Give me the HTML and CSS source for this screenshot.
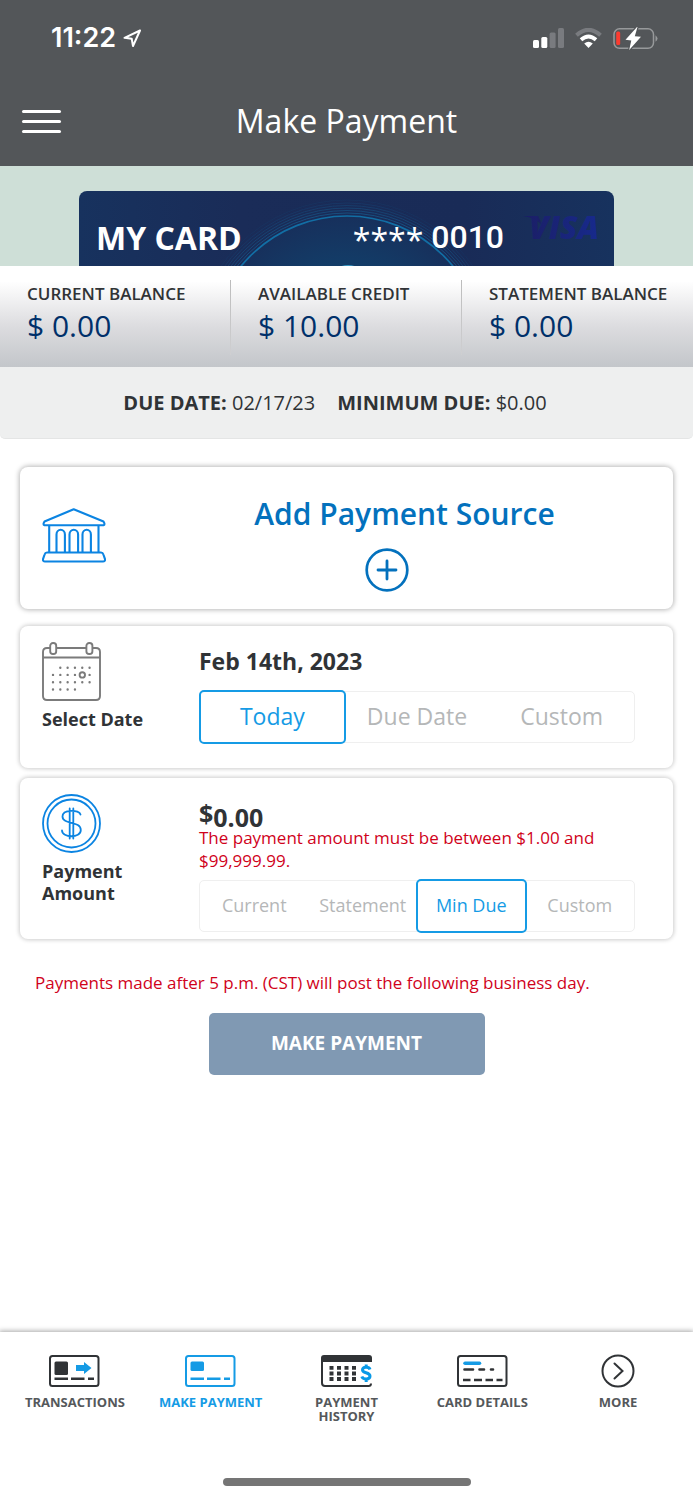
FILE: index.html
```html
<!DOCTYPE html>
<html lang="en">
<head>
<meta charset="utf-8">
<meta name="viewport" content="width=device-width, initial-scale=1">
<title>Make Payment</title>
<link rel="stylesheet" href="styles.css">
</head>
<body>
<header class="top">
  <div class="status">
    <div class="status-left">
      <span class="clock">11:22</span>
      <svg width="19" height="19" viewBox="0 0 19 19" fill="none" stroke="#fff" stroke-width="2" stroke-linejoin="round"><path d="M17 1.500 1.500 8.800 8.700 9.800 10 17Z"/></svg>
    </div>
    <div class="status-right">
      <svg width="31" height="20" viewBox="0 0 31 20"><rect y="12" width="6" height="8" rx="1.500" fill="#fff"/><rect x="8.300" y="9" width="6" height="11" rx="1.500" fill="#fff"/><rect x="16.600" y="4.500" width="6" height="15.500" rx="1.500" fill="#797b7f"/><rect x="25" width="6" height="20" rx="1.500" fill="#797b7f"/></svg>
      <svg width="27" height="20" viewBox="0 0 27 20" fill="none"><path d="M1.500 7.200Q13.500-3.500 25.500 7.200" stroke="#797b7f" stroke-width="4"/><path d="M6 11.800Q13.500 5.200 21 11.800" stroke="#fff" stroke-width="3.800"/><path d="M9.200 15.600Q13.500 12 17.800 15.600L13.500 20Z" fill="#fff"/></svg>
      <svg width="45" height="23" viewBox="0 0 45 23"><rect x="1" y="1.800" width="39.500" height="19.500" rx="5.500" fill="none" stroke="#97999b" stroke-width="1.500"/><path d="M42.500 8.200Q46.500 11.500 42.500 14.800Z" fill="#97999b"/><rect x="3.200" y="4.500" width="4" height="13.500" rx="1.500" fill="#fb3b30"/><path d="M24 0 12.500 12.800 18.300 13.600 16.200 23 28 9.800 21.800 9.200 24.500 0Z" fill="#fff" stroke="#535659" stroke-width="2.500" paint-order="stroke"/></svg>
    </div>
  </div>
  <div class="titlebar">
    <button class="menu" aria-label="Menu"><span></span><span></span><span></span></button>
    <h1>Make Payment</h1>
  </div>
</header>

<main>
  <section class="hero">
    <div class="bankcard">
      <svg class="art" viewBox="0 0 535 75" preserveAspectRatio="xMidYMin slice" fill="none">
        <defs>
          <linearGradient id="navy"><stop stop-color="#17325e"/><stop offset=".3" stop-color="#1a2c58"/><stop offset=".72" stop-color="#192b57"/><stop offset="1" stop-color="#17325e"/></linearGradient>
          <radialGradient id="glow"><stop stop-color="#075a88"/><stop offset=".6" stop-color="#123e69"/><stop offset="1" stop-color="#17305c"/></radialGradient>
          <linearGradient id="blue"><stop stop-color="#1b1f68"/><stop offset="1" stop-color="#172a8d"/></linearGradient>
        </defs>
        <path fill="url(#navy)" d="M0 0H535V75H0Z"/>
        <circle cx="268" cy="162" r="137" fill="url(#glow)" stroke="#126ea4" stroke-width="1.700"/>
        <g stroke="#176b9f"><circle cx="268" cy="162" r="140" opacity=".55"/><circle cx="268" cy="162" r="142.500" opacity=".45"/><circle cx="268" cy="162" r="145" opacity=".36"/><circle cx="268" cy="162" r="147.500" opacity=".27"/><circle cx="268" cy="162" r="150" opacity=".18"/><circle cx="268" cy="162" r="153" opacity=".1"/></g>
        <ellipse cx="269" cy="77" rx="9" ry="3" fill="#3b9ac4"/>
        <path d="M444 25H459L463 34Q457 27 444 25Z" fill="#1b1f68"/>
        <text class="visa" x="450" y="48" fill="url(#blue)">VISA</text>
      </svg>
      <span class="cardname">MY CARD</span>
      <span class="cardnum"><span class="stars">****</span><span>0010</span></span>
    </div>
  </section>

  <dl class="balances">
    <div><dt>CURRENT BALANCE</dt><dd>$ 0.00</dd></div>
    <div><dt>AVAILABLE CREDIT</dt><dd>$ 10.00</dd></div>
    <div><dt>STATEMENT BALANCE</dt><dd>$ 0.00</dd></div>
  </dl>

  <p class="due"><span><b>DUE DATE:</b> 02/17/23</span><span><b>MINIMUM DUE:</b> $0.00</span></p>

  <div class="panels">
    <section class="panel source">
      <svg width="64" height="55" viewBox="0 0 64 55" fill="none" stroke="#0b84e2" stroke-width="2.100" stroke-linejoin="round"><path d="M31.700 1.200 2.500 13.500Q.5 16.800 2.500 17.300H61.500Q63.500 16.800 61.500 13.500ZM7.200 17.500V44.500M56.500 17.500V44.500M14.500 44.500V26.500A4.200 4.700 0 0 1 22.900 26.500V44.500M27.500 44.500V26.500A4.300 4.700 0 0 1 36.100 26.500V44.500M40.500 44.500V26.500A4.200 4.700 0 0 1 48.900 26.500V44.500M5 44.500H59Q60.800 44.500 61.400 46.500L63 51.200Q63.300 53.500 61 53.500H3Q.7 53.500 1 51.200L2.600 46.500Q3.200 44.500 5 44.500Z"/></svg>
      <div class="source-body">
        <h2>Add Payment Source</h2>
        <button class="add" aria-label="Add payment source"><svg width="44" height="44" viewBox="0 0 44 44" fill="none" stroke="#0371bd" stroke-linecap="round"><circle cx="22" cy="22" r="20.300" stroke-width="2.700"/><path d="M22 13V31M13 22H31" stroke-width="2.800"/></svg></button>
      </div>
    </section>

    <section class="panel date">
      <div class="side">
        <svg width="59" height="59" viewBox="0 0 59 59" fill="none" stroke="#7b7b7b" stroke-width="1.900"><path d="M8 6H5Q1 6 1 10V54Q1 58 5 58H54Q58 58 58 54V10Q58 6 54 6H50M14.500 6H44M1 15.500H58"/><rect x="8.200" y="1" width="6" height="11" rx="2.800"/><rect x="44.400" y="1" width="6" height="11" rx="2.800"/><circle cx="40.300" cy="32.900" r="2.700"/><path stroke-width="2.400" stroke-linecap="round" stroke-dasharray="0 7.320" d="M18.300 25.700H48M11 32.900H34M47.600 32.900h.1M11 40.200H48M11 47.500H34"/></svg>
        <h2>Select Date</h2>
      </div>
      <div class="fields">
        <p class="value">Feb 14th, 2023</p>
        <div class="tabs" role="group" aria-label="Select date">
          <button aria-pressed="true">Today</button><button aria-pressed="false">Due Date</button><button aria-pressed="false">Custom</button>
        </div>
      </div>
    </section>

    <section class="panel amount">
      <div class="side">
        <svg width="59" height="59" viewBox="0 0 59 59" fill="none" stroke="#0b84e2" stroke-width="1.800" stroke-linecap="round"><circle cx="29.500" cy="29.500" r="28.500"/><circle cx="29.500" cy="29.500" r="24"/><path d="M38.500 20.500C37.500 15.500 20.500 15 20.500 22.500C20.500 31 38.800 26.500 38.800 36C38.800 44.500 20 44 20 36.500M27.700 14.500V44.500M31.300 14.500V44.500"/></svg>
        <h2>Payment Amount</h2>
      </div>
      <div class="fields">
        <p class="value money"><span class="currency">$</span>0.00</p>
        <p class="error">The payment amount must be between $1.00 and $99,999.99.</p>
        <div class="tabs small" role="group" aria-label="Payment amount">
          <button aria-pressed="false">Current</button><button aria-pressed="false">Statement</button><button aria-pressed="true">Min Due</button><button aria-pressed="false">Custom</button>
        </div>
      </div>
    </section>
  </div>

  <p class="note">Payments made after 5 p.m. (CST) will post the following business day.</p>
  <button class="submit">MAKE PAYMENT</button>
</main>

<footer class="bottom">
  <nav>
    <a href="#transactions"><svg width="51" height="34" viewBox="0 0 51 34"><rect x="1" y="2" width="48.500" height="30" rx="2.500" fill="none" stroke="#303336" stroke-width="2"/><rect x="5.500" y="7.500" width="13.500" height="13.500" rx="1.500" fill="#303336"/><path d="M27 11H35V8L42.500 14 35 20V17H27Z" fill="#159be5"/><path d="M5.500 24.700H19M22 24.700H35.500M39 24.700H45" stroke="#303336" stroke-width="2.600"/></svg>TRANSACTIONS</a>
    <a href="#payment" class="current" aria-current="page"><svg width="51" height="34" viewBox="0 0 51 34"><rect x="1" y="2" width="48.500" height="30" rx="2.500" fill="none" stroke="#159be5" stroke-width="2"/><rect x="5.500" y="7.500" width="13.500" height="9.500" rx="1.500" fill="#159be5"/><path d="M5.500 24.700H19M22 24.700H35.500M39 24.700H45" stroke="#159be5" stroke-width="2.600"/></svg>MAKE PAYMENT</a>
    <a href="#history"><svg width="51" height="34" viewBox="0 0 51 34" fill="none"><path d="M50 29.500Q50 32 47.500 32H4Q1 32 1 29V4.500" stroke="#303336" stroke-width="2"/><path d="M0 8V4Q0 1 3 1H48Q51 1 51 4V8Z" fill="#303336"/><path d="M8.500 13.900H36M8.500 19.500H36M8.500 25H36" stroke="#303336" stroke-width="3.800" stroke-dasharray="4 3.500"/><path d="M49 15.500C48 12.300 41.500 12.500 41.500 16C41.500 19.500 49 18 49 22C49 26 42 25.800 40.800 22.500M45.200 10.500V13M45.200 25V28" stroke="#0899e7" stroke-width="3"/></svg>PAYMENT<br>HISTORY</a>
    <a href="#details"><svg width="51" height="34" viewBox="0 0 51 34" fill="none"><rect x="1" y="2" width="48.500" height="30" rx="2.500" stroke="#303336" stroke-width="2"/><g stroke-linecap="round"><path d="M8 9.200H22.500" stroke="#159be5" stroke-width="3.500"/><path d="M7.500 15.500H16M22.500 15.500H27M34 15.500H36" stroke="#303336" stroke-width="2.600"/></g><path d="M6 26H13.500M17 26H25M28.500 26H36M39.500 26H45.500" stroke="#303336" stroke-width="2.600"/></svg>CARD DETAILS</a>
    <a href="#more"><svg width="34" height="34" viewBox="0 0 34 34" fill="none" stroke="#303336" stroke-width="2"><circle cx="17" cy="17" r="15.500"/><path d="M13.500 9.500 21.500 17 13.500 24.500" stroke-linecap="round"/></svg>MORE</a>
  </nav>
  <div class="home"></div>
</footer>
</body>
</html>
```
FILE: styles.css
```css
* { box-sizing: border-box; }
body {
  margin: 0;
  min-height: 100vh;
  display: flex;
  flex-direction: column;
  background: #fff;
  color: #303336;
  font-family: "Open Sans", sans-serif;
}
h1, h2, p, dl, dd { margin: 0; }
button { margin: 0; padding: 0; border: 0; background: none; font: inherit; color: inherit; cursor: pointer; }
svg { display: block; flex: none; }

.top { background: #535659; color: #fff; }
.status { display: flex; justify-content: space-between; height: 76px; padding: 0 35px 0 51px; align-items: center; }
.status-left { display: flex; align-items: center; gap: 7px; }
.status-right { display: flex; align-items: center; gap: 11px; }
.clock { font: 600 27px/32px Inter, sans-serif; }
.titlebar { display: grid; grid-template-columns: 60px 1fr 60px; align-items: center; height: 90px; }
.titlebar h1 { font-size: 32px; line-height: 44px; font-weight: 400; text-align: center; }
.menu { display: flex; flex-direction: column; gap: 7px; width: 39px; margin-left: 22px; }
.menu span { height: 3px; border-radius: 2px; background: #fff; }

.hero { background: #cedfd7; padding: 25px 79px 0; }
.bankcard {
  position: relative;
  display: flex;
  align-items: center;
  justify-content: space-between;
  height: 75px;
  padding: 19px 110px 0 17px;
  border-radius: 8px 8px 0 0;
  overflow: hidden;
  color: #fff;
}
.art { position: absolute; inset: 0; width: 100%; height: 100%; }
.visa { font: italic 800 32px "Open Sans", sans-serif; }
.cardname { position: relative; font-size: 32px; line-height: 40px; font-weight: 700; }
.cardnum { position: relative; display: flex; gap: 8px; font: 500 32px/38px Roboto, sans-serif; }
.stars { padding-top: 3px; font-family: "Open Sans", sans-serif; font-weight: 400; }

.balances { display: grid; grid-template-columns: repeat(3, 1fr); height: 101px; background: linear-gradient(#fff 15%, #dcdcdf 60%, #c3c6ca); }
.balances div { position: relative; padding: 16px 0 0 27px; white-space: nowrap; }
.balances div + div::before { content: ""; position: absolute; left: -1px; top: 14px; height: 75px; width: 1px; background: linear-gradient(#bcbcbc, #cfcfd1); }
.balances dt { font-size: 17px; line-height: 24px; font-weight: 600; }
.balances dd { font-size: 30px; line-height: 40px; color: #00306a; }

.due { display: flex; justify-content: center; align-items: center; gap: 22px; height: 72px; padding-right: 23px; background: #eeefef; border-bottom: 1px solid #e4e5e5; border-radius: 0 0 5px 5px; font-size: 20px; line-height: 28px; }

.panels { display: flex; flex-direction: column; padding: 28px 20px 0; }
.panel { border-radius: 8px; background: #fff; box-shadow: 0 0 4px 1px rgba(0, 0, 0, .2); margin-bottom: 10px; }
.source { display: flex; align-items: center; height: 142px; padding: 0 6px 6px 22px; margin-bottom: 17px; box-shadow: 0 0 5px 1px rgba(0, 0, 0, .28); }
.source-body { flex: 1; display: flex; flex-direction: column; align-items: center; gap: 12px; padding-top: 14px; }
.source-body h2 { padding-left: 36px; font-size: 30px; line-height: 44px; font-weight: 600; color: #0371bd; }
.date, .amount { display: grid; grid-template-columns: 157px 1fr; padding: 16px 38px 0 22px; }
.date { height: 142px; }
.amount { min-height: 160px; padding-bottom: 7px; margin-bottom: 0; }
.side h2 { margin-top: 7px; width: 110px; font-size: 18px; line-height: 22px; font-weight: 700; }
.value { font-size: 23px; line-height: 38px; font-weight: 700; }
.tabs { display: grid; grid-auto-flow: column; grid-auto-columns: 1fr; height: 52px; margin-top: 11px; border: 1px solid #efefef; border-radius: 5px; font-size: 23px; color: #b5b7b8; }
.tabs button { margin: -2px -1px; padding-bottom: 3px; border: 2px solid transparent; border-radius: 5px; }
.tabs button[aria-pressed="true"] { border-color: #159be5; color: #159be5; background: #fff; }
.tabs.small { margin-top: 8px; font-size: 18px; }
.value.money { display: flex; padding-top: 10px; font-size: 25px; line-height: 26px; }
.money .currency { margin-top: -4px; }
.error { margin-top: -4px; font-size: 17px; line-height: 23px; color: #d0021b; }
.note { padding: 32px 35px 0; font-size: 17px; line-height: 24px; color: #d0021b; }
.submit { display: block; width: 276px; height: 62px; margin: 18px auto 0; padding-bottom: 2px; border-radius: 5px; background: #8099b3; color: #fff; font-size: 19px; font-weight: 700; }

.bottom { margin-top: auto; height: 168px; padding-top: 22px; box-shadow: 0 0 5px 1px rgba(0, 0, 0, .35); }
.bottom nav { display: grid; grid-template-columns: repeat(5, 1fr); padding: 0 7px; height: 124px; }
.bottom a { display: flex; flex-direction: column; align-items: center; color: #55585b; text-decoration: none; text-align: center; font-size: 13px; line-height: 14px; font-weight: 700; white-space: nowrap; }
.bottom a svg { margin-bottom: 7px; }
.bottom a.current { color: #159be5; }
.home { width: 248px; height: 8px; margin: 0 auto; border-radius: 4px; background: #757575; }
```
